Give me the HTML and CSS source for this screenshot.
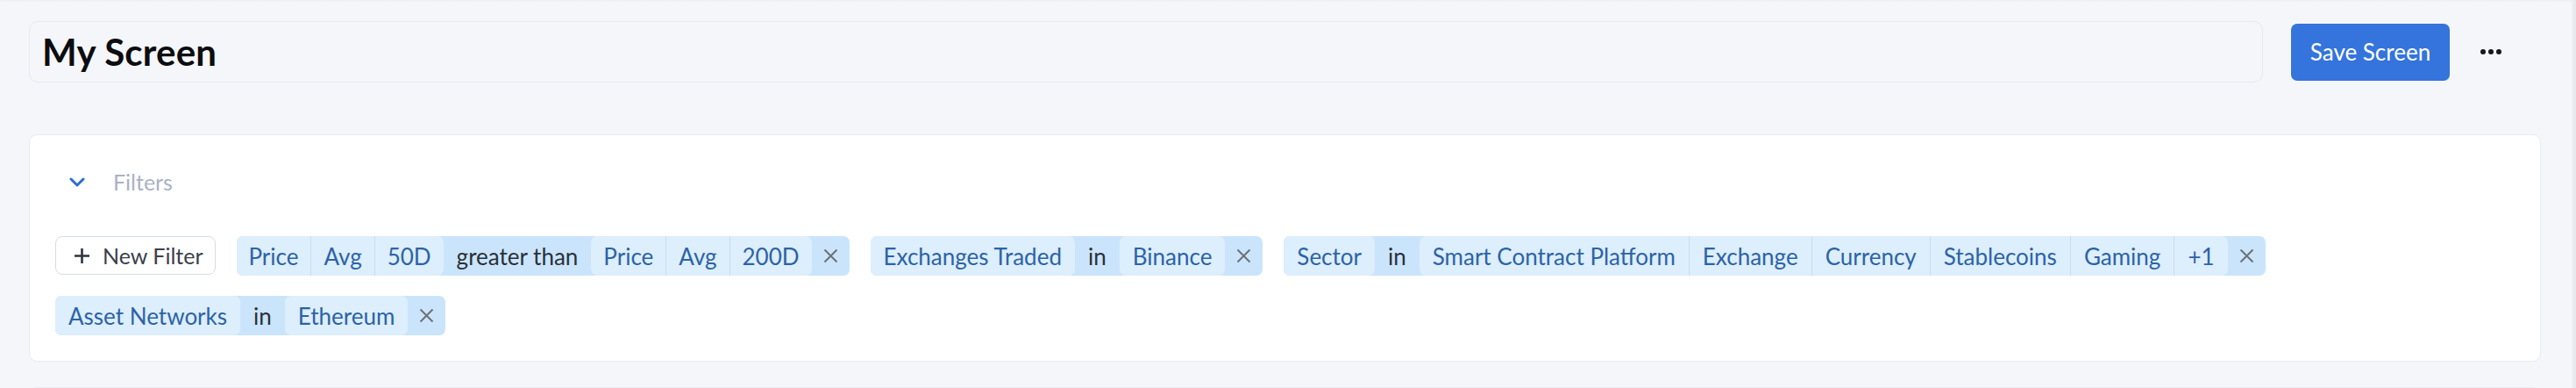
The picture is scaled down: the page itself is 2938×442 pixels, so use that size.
FILE: index.html
```html
<!DOCTYPE html>
<html lang="en">
<head>
<meta charset="utf-8">
<title>My Screen</title>
<link rel="stylesheet" href="styles.css">
</head>
<body>
<div class="app">
  <main class="page">
    <div class="topshade"></div>
    <header class="header">
      <div class="name-input">My Screen</div>
      <button class="save-btn">Save Screen</button>
      <button class="more-btn" aria-label="More"><span class="dot"></span><span class="dot"></span><span class="dot"></span></button>
    </header>

    <section class="card">
      <div class="card-head">
        <span class="chevron">
          <svg width="18" height="11" viewBox="0 0 18 11"><path d="M2 2 L9 9 L16 2" fill="none" stroke="#2f6bd3" stroke-width="3" stroke-linecap="round" stroke-linejoin="round"/></svg>
        </span>
        <span class="card-title">Filters</span>
      </div>
      <div class="filters">
        <button class="new-filter">
          <svg width="19" height="19" viewBox="0 0 19 19"><path d="M9.5 1 V18 M1 9.5 H18" stroke="#2f3440" stroke-width="2.6"/></svg>
          <span>New Filter</span>
        </button>

        <div class="chip">
          <div class="grp"><span class="seg num">Price</span><span class="seg num">Avg</span><span class="seg num">50D</span></div>
          <span class="op">greater than</span>
          <div class="grp"><span class="seg num">Price</span><span class="seg num">Avg</span><span class="seg num">200D</span></div>
          <span class="x"><svg width="17" height="17" viewBox="0 0 17 17"><path d="M1.5 1.5 L15.5 15.5 M15.5 1.5 L1.5 15.5" stroke="#6d7177" stroke-width="2"/></svg></span>
        </div>

        <div class="chip">
          <div class="grp"><span class="seg">Exchanges Traded</span></div>
          <span class="op">in</span>
          <div class="grp"><span class="seg">Binance</span></div>
          <span class="x"><svg width="17" height="17" viewBox="0 0 17 17"><path d="M1.5 1.5 L15.5 15.5 M15.5 1.5 L1.5 15.5" stroke="#6d7177" stroke-width="2"/></svg></span>
        </div>

        <div class="chip">
          <div class="grp"><span class="seg">Sector</span></div>
          <span class="op">in</span>
          <div class="grp"><span class="seg">Smart Contract Platform</span><span class="seg">Exchange</span><span class="seg">Currency</span><span class="seg">Stablecoins</span><span class="seg">Gaming</span><span class="seg">+1</span></div>
          <span class="x"><svg width="17" height="17" viewBox="0 0 17 17"><path d="M1.5 1.5 L15.5 15.5 M15.5 1.5 L1.5 15.5" stroke="#6d7177" stroke-width="2"/></svg></span>
        </div>

        <div class="chip">
          <div class="grp"><span class="seg">Asset Networks</span></div>
          <span class="op">in</span>
          <div class="grp"><span class="seg">Ethereum</span></div>
          <span class="x"><svg width="17" height="17" viewBox="0 0 17 17"><path d="M1.5 1.5 L15.5 15.5 M15.5 1.5 L1.5 15.5" stroke="#6d7177" stroke-width="2"/></svg></span>
        </div>
      </div>
    </section>

    <section class="card next-card"></section>
  </main>
  <div class="scrollbar"></div>
</div>
</body>
</html>
```

FILE: styles.css
```css
* { box-sizing: border-box; }

html, body {
  margin: 0;
  padding: 0;
  height: 100%;
  overflow: hidden;
}

body {
  background: #f5f6fa;
  font-family: "Lato", "Liberation Sans", sans-serif;
  color: #2b2f3a;
}

.app {
  display: flex;
  height: 442px;
  overflow: hidden;
}

.page {
  flex: 1;
  min-width: 0;
  overflow: hidden;
}

.scrollbar {
  width: 5px;
  background: linear-gradient(to right, #eef0f3, #e6e7eb);
}

.topshade {
  height: 3px;
  background: linear-gradient(to bottom, #eceef2, #f5f6fa);
}

.header {
  display: flex;
  align-items: center;
  padding: 21px 62px 0 33px;
}

.name-input {
  flex: 1;
  height: 70px;
  display: flex;
  align-items: center;
  padding-left: 14px;
  border: 1px solid #e6e9ef;
  border-radius: 10px;
  background: #f5f6fa;
  font-size: 42px;
  font-weight: 700;
  color: #0c0d10;
  letter-spacing: 0.2px;
}

.save-btn {
  margin-left: 32px;
  width: 181px;
  height: 65px;
  border: none;
  border-radius: 7px;
  background: #3474dc;
  color: #ffffff;
  font-family: inherit;
  font-size: 26px;
  padding: 0;
}

.more-btn {
  margin-left: 17px;
  width: 60px;
  height: 40px;
  border: none;
  background: transparent;
  display: flex;
  align-items: center;
  justify-content: center;
  gap: 3px;
  padding: 0;
}

.dot {
  width: 6px;
  height: 6px;
  border-radius: 50%;
  background: #16181d;
}

.card {
  margin: 59px 35px 0 33px;
  background: #ffffff;
  border: 1px solid #e7eaf0;
  border-radius: 9px;
  padding: 29px;
}

.next-card {
  margin-top: 29px;
  height: 60px;
}

.card-head {
  display: flex;
  align-items: center;
  height: 48px;
}

.chevron {
  display: flex;
  margin-left: 16px;
  width: 18px;
}

.card-title {
  margin-left: 32px;
  font-size: 25px;
  color: #a9b2c6;
}

.filters {
  margin-top: 38px;
  display: flex;
  flex-wrap: wrap;
  gap: 23px 24px;
}

.new-filter {
  height: 44px;
  display: flex;
  align-items: center;
  gap: 14px;
  padding: 0 13px 0 20px;
  background: #ffffff;
  border: 1px solid #d6dce7;
  border-radius: 8px;
  font-family: inherit;
  font-size: 25px;
  color: #3b404c;
}

.chip {
  height: 45px;
  display: flex;
  align-items: stretch;
  background: #cae5fb;
  border-radius: 7px;
  font-size: 26px;
}

.grp {
  display: flex;
  background: #ddeefc;
  border-radius: 7px;
}

.seg {
  display: flex;
  align-items: center;
  padding: 0 15px;
  color: #2c63a8;
  white-space: nowrap;
}

.seg.num {
  padding: 0 14px;
}

.seg + .seg {
  border-left: 1px solid #cadcec;
}

.op {
  display: flex;
  align-items: center;
  padding: 0 15px;
  color: #2b2f3a;
  white-space: nowrap;
}

.x {
  display: flex;
  align-items: center;
  padding: 0 13px;
}
```
